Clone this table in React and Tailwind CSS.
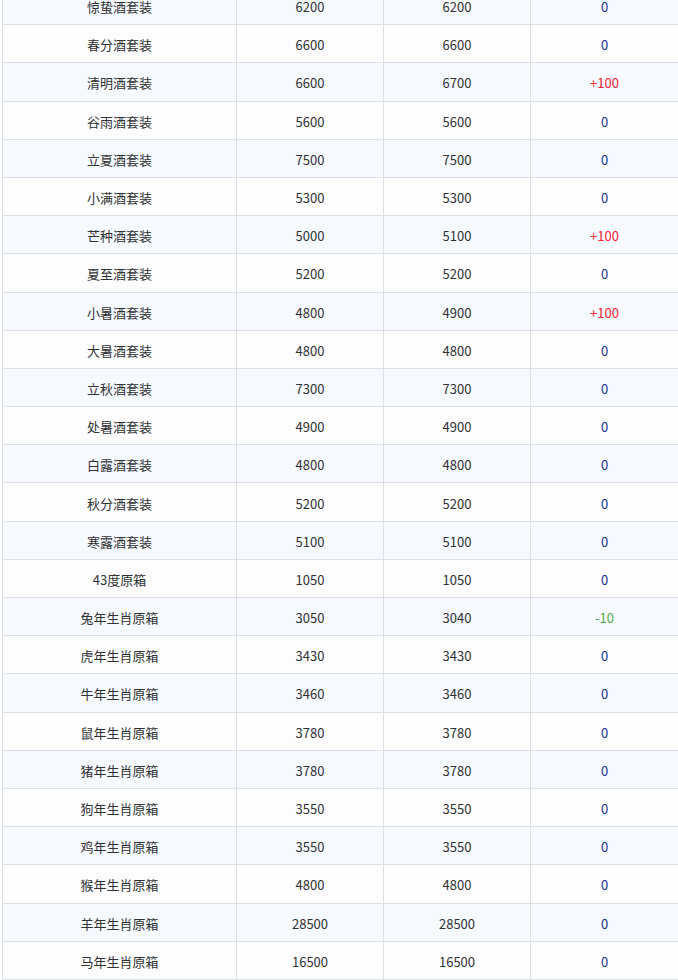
const rows = [
  ["惊蛰酒套装", 6200, 6200],
  ["春分酒套装", 6600, 6600],
  ["清明酒套装", 6600, 6700],
  ["谷雨酒套装", 5600, 5600],
  ["立夏酒套装", 7500, 7500],
  ["小满酒套装", 5300, 5300],
  ["芒种酒套装", 5000, 5100],
  ["夏至酒套装", 5200, 5200],
  ["小暑酒套装", 4800, 4900],
  ["大暑酒套装", 4800, 4800],
  ["立秋酒套装", 7300, 7300],
  ["处暑酒套装", 4900, 4900],
  ["白露酒套装", 4800, 4800],
  ["秋分酒套装", 5200, 5200],
  ["寒露酒套装", 5100, 5100],
  ["43度原箱", 1050, 1050],
  ["兔年生肖原箱", 3050, 3040],
  ["虎年生肖原箱", 3430, 3430],
  ["牛年生肖原箱", 3460, 3460],
  ["鼠年生肖原箱", 3780, 3780],
  ["猪年生肖原箱", 3780, 3780],
  ["狗年生肖原箱", 3550, 3550],
  ["鸡年生肖原箱", 3550, 3550],
  ["猴年生肖原箱", 4800, 4800],
  ["羊年生肖原箱", 28500, 28500],
  ["马年生肖原箱", 16500, 16500],
];

function Change({ diff }) {
  if (diff > 0) return <span className="text-[#f5222d]">+{diff}</span>;
  if (diff < 0) return <span className="text-[#52a84a]">{diff}</span>;
  return <span className="text-[#18308c]">0</span>;
}

export default function App() {
  return (
    <div
      className="w-[678px] h-[980px] overflow-hidden bg-white pl-[2px]"
      style={{ fontFamily: '"Noto Sans CJK SC", "Noto Sans", sans-serif' }}
    >
      <table className="-mt-[14px] w-[690px] table-fixed border-collapse text-[13px] text-[#303133]">
        <colgroup>
          <col className="w-[234px]" />
          <col className="w-[147px]" />
          <col className="w-[147px]" />
          <col className="w-[162px]" />
        </colgroup>
        <tbody>
          {rows.map(([name, a, b], i) => (
            <tr
              key={name}
              className={i % 2 === 0 ? "bg-[#f6f9fe] h-[38.2px]" : "bg-[#fdfdfe] h-[38.2px]"}
            >
              <td className="border border-[#dcdfe6] text-center p-0 pt-[2px] leading-none">{name}</td>
              <td className="border border-[#dcdfe6] text-center p-0 pt-[2px] leading-none">{a}</td>
              <td className="border border-[#dcdfe6] text-center p-0 pt-[2px] leading-none">{b}</td>
              <td className="border border-[#dcdfe6] text-center p-0 pt-[2px] leading-none pr-[14px]">
                <Change diff={b - a} />
              </td>
            </tr>
          ))}
        </tbody>
      </table>
    </div>
  );
}
